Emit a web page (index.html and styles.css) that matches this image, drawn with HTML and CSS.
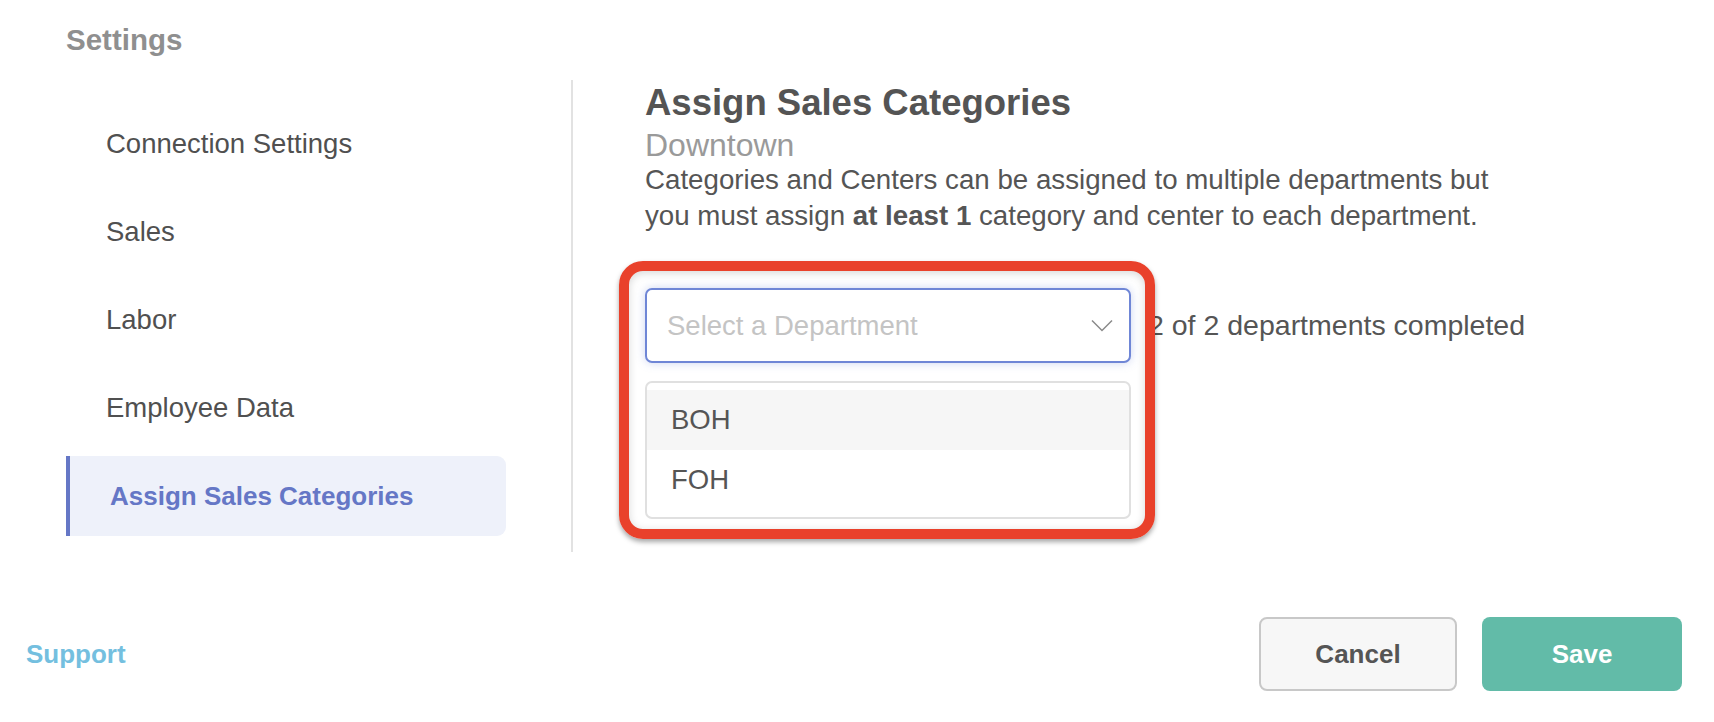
FILE: index.html
```html
<!DOCTYPE html>
<html lang="en">
<head>
    <meta charset="UTF-8">
    <title>Settings - Assign Sales Categories</title>
    <link rel="stylesheet" href="styles.css">
</head>
<body>
<div class="page">
    <h1 class="page-title">Settings</h1>

    <div class="layout">
        <nav class="sidebar">
            <a class="nav-item" href="#">Connection Settings</a>
            <a class="nav-item" href="#">Sales</a>
            <a class="nav-item" href="#">Labor</a>
            <a class="nav-item" href="#">Employee Data</a>
            <a class="nav-item active" href="#">Assign Sales Categories</a>
        </nav>

        <main class="content">
            <h2 class="content-title">Assign Sales Categories</h2>
            <div class="location">Downtown</div>
            <p class="description">Categories and Centers can be assigned to multiple departments but you must assign <b>at least 1</b> category and center to each department.</p>

            <div class="dept-row">
                <div class="dept-picker">
                    <div class="select">
                        <span class="placeholder">Select a Department</span>
                        <svg class="chevron" width="22" height="13" viewBox="0 0 22 13">
                            <polyline points="1,1.5 11,11.5 21,1.5" fill="none" stroke="#8a8a8a" stroke-width="1.5"/>
                        </svg>
                    </div>
                    <ul class="options">
                        <li class="option hover">BOH</li>
                        <li class="option">FOH</li>
                    </ul>
                </div>
                <span class="dept-status">2 of 2 departments completed</span>
            </div>
        </main>
    </div>

    <footer class="footer">
        <a class="support" href="#">Support</a>
        <div class="actions">
            <button type="button" class="btn btn-cancel">Cancel</button>
            <button type="button" class="btn btn-save">Save</button>
        </div>
    </footer>
</div>
</body>
</html>
```

FILE: styles.css
```css
body {
    margin: 0;
    background-color: #fff;
    color: #555;
    font-family: "Liberation Sans", Arial, sans-serif;
}

.page {
    height: 722px;
    display: flex;
    flex-direction: column;
}

.page-title {
    margin: 0;
    padding: 22px 0 0 66px;
    height: 36px;
    line-height: 36px;
    font-size: 29.5px;
    font-weight: bold;
    color: #8f8f8f;
}

.layout {
    display: flex;
    margin-top: 22px;
    height: 472px;
}

/* menu de la izquierda */
.sidebar {
    display: flex;
    flex-direction: column;
    gap: 8px;
    width: 440px;
    padding: 24px 65px 0 66px;
    border-right: 2px solid #e2e2e2;
}

.nav-item {
    display: flex;
    align-items: center;
    height: 80px;
    padding-left: 40px;
    font-size: 27.5px;
    color: #505050;
    text-decoration: none;
}

.nav-item.active {
    padding-left: 40px;
    border-left: 4px solid #6577c6;
    border-radius: 0 9px 9px 0;
    background-color: #eef1fa;
    color: #6577c6;
    font-size: 26px;
    font-weight: bold;
}

.content {
    padding-left: 72px;
}

.content-title {
    margin: 0;
    line-height: 46px;
    font-size: 36.5px;
    font-weight: bold;
    color: #545454;
}

.location {
    line-height: 38px;
    font-size: 32px;
    color: #9a9a9a;
}

.description {
    margin: -2px 0 0;
    max-width: 875px;
    line-height: 36px;
    font-size: 27.7px;
}

.dept-row {
    display: flex;
    align-items: flex-start;
    gap: 17px;
    margin-top: 54px;
}

.dept-picker {
    position: relative;
    width: 486px;
}

/* recuadro rojo de la captura */
.dept-picker::before {
    content: "";
    position: absolute;
    top: -27px;
    left: -26px;
    right: -24px;
    bottom: -20px;
    border: 10px solid #e9412b;
    border-radius: 24px;
    box-shadow: 0 3px 5px rgba(0, 0, 0, 0.35), inset 0 2px 8px rgba(0, 0, 0, 0.16);
    pointer-events: none;
}

.select {
    display: flex;
    align-items: center;
    justify-content: space-between;
    box-sizing: border-box;
    height: 75px;
    padding: 0 16px 0 20px;
    border: 2px solid #6f86d6;
    border-radius: 7px;
    background-color: #fff;
    box-shadow: 0 0 10px rgba(111, 134, 214, 0.35);
}

.placeholder {
    font-size: 27.5px;
    color: #c4c4c4;
}

.options {
    list-style: none;
    margin: 18px 0 0;
    padding: 7px 0;
    border: 2px solid #e0e0e0;
    border-radius: 7px;
    background-color: #fff;
}

.option {
    height: 60px;
    line-height: 60px;
    padding-left: 24px;
    font-size: 27.5px;
    color: #555;
}

.option.hover {
    background-color: #f6f6f6;
}

.dept-status {
    line-height: 75px;
    font-size: 28.5px;
    color: #555;
}

.footer {
    display: flex;
    align-items: center;
    justify-content: space-between;
    margin-top: auto;
    padding: 0 32px 31px 26px;
}

.support {
    font-size: 26px;
    font-weight: bold;
    color: #74bfdf;
    text-decoration: none;
}

.actions {
    display: flex;
    gap: 25px;
}

.btn {
    width: 200px;
    height: 74px;
    border-radius: 8px;
    font-family: "Liberation Sans", Arial, sans-serif;
    font-size: 26px;
    font-weight: bold;
    cursor: pointer;
}

.btn-cancel {
    width: 198px;
    border: 2px solid #c8c8c8;
    background-color: #f7f7f7;
    color: #555;
}

.btn-save {
    border: none;
    background-color: #62bba8;
    color: #fff;
}
```
